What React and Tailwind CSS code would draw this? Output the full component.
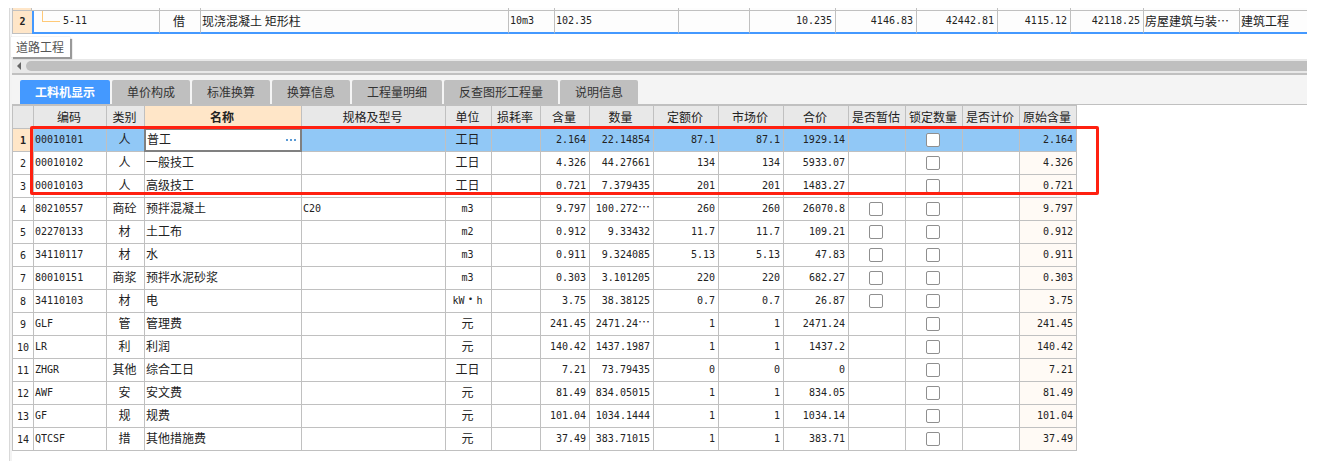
import React, { useState } from 'react';

const tabs = [
  { label: '工料机显示', width: 'w-[90px]' },
  { label: '单价构成', width: 'w-[78px]' },
  { label: '标准换算', width: 'w-[78px]' },
  { label: '换算信息', width: 'w-[78px]' },
  { label: '工程量明细', width: 'w-[90px]' },
  { label: '反查图形工程量', width: 'w-[114px]' },
  { label: '说明信息', width: 'w-[78px]' },
];

const columns = [
  { key: 'code', label: '编码', width: 'w-[73px]', align: 'text-left' },
  { key: 'type', label: '类别', width: 'w-[38px]', align: 'text-center' },
  { key: 'name', label: '名称', width: 'w-[157px]', align: 'text-left' },
  { key: 'spec', label: '规格及型号', width: 'w-[144px]', align: 'text-left' },
  { key: 'unit', label: '单位', width: 'w-[46px]', align: 'text-center' },
  { key: 'loss', label: '损耗率', width: 'w-[49px]', align: 'text-right' },
  { key: 'content', label: '含量', width: 'w-[49px]', align: 'text-right' },
  { key: 'qty', label: '数量', width: 'w-[64px]', align: 'text-right' },
  { key: 'quota', label: '定额价', width: 'w-[65px]', align: 'text-right' },
  { key: 'market', label: '市场价', width: 'w-[65px]', align: 'text-right' },
  { key: 'total', label: '合价', width: 'w-[65px]', align: 'text-right' },
  { key: 'estimate', label: '是否暂估', width: 'w-[57px]', align: 'text-center' },
  { key: 'lock', label: '锁定数量', width: 'w-[57px]', align: 'text-center' },
  { key: 'priced', label: '是否计价', width: 'w-[57px]', align: 'text-center' },
  { key: 'original', label: '原始含量', width: 'w-[57px]', align: 'text-right' },
];

// code, type, name, spec, unit, content, qty, quota, market, total, has estimate box
const resources = [
  ['00010101', '人', '普工', '', '工日', '2.164', '22.14854', '87.1', '87.1', '1929.14', false],
  ['00010102', '人', '一般技工', '', '工日', '4.326', '44.27661', '134', '134', '5933.07', false],
  ['00010103', '人', '高级技工', '', '工日', '0.721', '7.379435', '201', '201', '1483.27', false],
  ['80210557', '商砼', '预拌混凝土', 'C20', 'm3', '9.797', '100.272⋯', '260', '260', '26070.8', true],
  ['02270133', '材', '土工布', '', 'm2', '0.912', '9.33432', '11.7', '11.7', '109.21', true],
  ['34110117', '材', '水', '', 'm3', '0.911', '9.324085', '5.13', '5.13', '47.83', true],
  ['80010151', '商浆', '预拌水泥砂浆', '', 'm3', '0.303', '3.101205', '220', '220', '682.27', true],
  ['34110103', '材', '电', '', 'kW·h', '3.75', '38.38125', '0.7', '0.7', '26.87', true],
  ['GLF', '管', '管理费', '', '元', '241.45', '2471.24⋯', '1', '1', '2471.24', false],
  ['LR', '利', '利润', '', '元', '140.42', '1437.1987', '1', '1', '1437.2', false],
  ['ZHGR', '其他', '综合工日', '', '工日', '7.21', '73.79435', '0', '0', '0', false],
  ['AWF', '安', '安文费', '', '元', '81.49', '834.05015', '1', '1', '834.05', false],
  ['GF', '规', '规费', '', '元', '101.04', '1034.1444', '1', '1', '1034.14', false],
  ['QTCSF', '措', '其他措施费', '', '元', '37.49', '383.71015', '1', '1', '383.71', false],
].map(([code, type, name, spec, unit, content, qty, quota, market, total, estimate]) => ({
  code, type, name, spec, unit, loss: '', content, qty, quota, market, total, estimate, original: content,
}));

const cjk = "font-['Noto_Sans_CJK_SC',sans-serif] text-[12px]";
const mono = "font-['DejaVu_Sans_Mono','Noto_Sans_CJK_SC',monospace] text-[10px]";

// Han text is set two pixels larger than digits so that both keep the half-width rhythm
function fontFor(text) {
  return /[\u4e00-\u9fff]/.test(text)
    ? cjk + ' align-top leading-[20px]'
    : mono + ' align-middle leading-[22px]';
}

// Ellipsis and middle dot take a full-width cell
function CellText({ text }) {
  return text.split(/([⋯·])/).map((part, i) =>
    part === '⋯' || part === '·' ? (
      <span key={i} className="inline-block w-[12px] text-center font-['Noto_Sans_CJK_SC',sans-serif] text-[12px] leading-[12px]">
        {part}
      </span>
    ) : part
  );
}

function CheckBox({ label }) {
  return (
    <input
      type="checkbox"
      aria-label={label}
      className="mx-auto block size-[14px] appearance-none rounded-xs border border-[#8f8f8f] bg-white checked:bg-[#4499ff]"
    />
  );
}

function ParentRow() {
  const cell = 'border-r border-r-[#c0c0c0] border-b-2 border-b-[#4499ff] pl-px pr-[3px] py-0 truncate align-top ';
  return (
    <table className="w-full table-fixed border-separate border-spacing-0 leading-[20px] text-[#222]">
      <colgroup>
        <col className="w-[19px]" />
        <col className="w-[128px]" />
        <col className="w-[41px]" />
        <col className="w-[308px]" />
        <col className="w-[46px]" />
        <col className="w-[124px]" />
        <col className="w-[71px]" />
        <col className="w-[86px]" />
        <col className="w-[81px]" />
        <col className="w-[81px]" />
        <col className="w-[73px]" />
        <col className="w-[73px]" />
        <col className="w-[96px]" />
        <col />
      </colgroup>
      <tbody>
        <tr className="leading-[0]">
          {Array.from({ length: 14 }, (_, i) => (
            <td key={i} className={'h-[3px] border-b border-[#c0c0c0] p-0 ' + (i === 13 ? '' : 'border-r ') + (i === 0 ? 'bg-[#ffe6c8]' : 'bg-[#fdfdfd]')} />
          ))}
        </tr>
        <tr className="h-[23px] bg-[#fdfdfd]">
          <th scope="row" className={mono + ' border-b border-[#c0c0c0] bg-[#ffe6c8] p-0 text-center font-bold'}>2</th>
          <td className={cell + mono + ' border-l-2 border-l-[#4499ff]'}>
            <div className="flex items-start">
              <span className="ml-[7px] h-[11px] w-[18px] border-b border-l border-[#ffc977]" />
              <span className="ml-[3px]">5-11</span>
            </div>
          </td>
          <td className={cell + cjk + ' text-center'}>借</td>
          <td className={cell + cjk}>现浇混凝土 矩形柱</td>
          <td className={cell + mono}>10m3</td>
          <td className={cell + mono}>102.35</td>
          <td className={cell + mono} />
          {['10.235', '4146.83', '42442.81', '4115.12', '42118.25'].map((value) => (
            <td key={value} className={cell + mono + ' text-right'}>{value}</td>
          ))}
          <td className={cell + cjk}>房屋建筑与装⋯</td>
          <td className={cjk + ' truncate border-b-2 border-b-[#4499ff] py-0 pl-px pr-[3px] align-top'}>建筑工程</td>
        </tr>
      </tbody>
    </table>
  );
}

function ResourceCell({ column, row, selected }) {
  if (column.key === 'lock') return <CheckBox label={'锁定数量 ' + row.code} />;
  if (column.key === 'estimate') return row.estimate ? <CheckBox label={'是否暂估 ' + row.code} /> : null;
  if (column.key === 'name' && selected) {
    return (
      <div className="-my-px -mr-[4px] -ml-[2px] flex h-[24px] items-center border-2 border-[#808080] bg-white pr-[3px] pl-px">
        <input
          aria-label="名称"
          defaultValue={row.name}
          className={cjk + ' h-[20px] min-w-0 flex-1 bg-transparent pb-[2px] text-[#222] outline-none'}
        />
        <button type="button" aria-label="选择" className="flex gap-[2px] p-px">
          <span className="size-[2px] bg-[#5b9bd5]" />
          <span className="size-[2px] bg-[#5b9bd5]" />
          <span className="size-[2px] bg-[#5b9bd5]" />
        </button>
      </div>
    );
  }
  return <CellText text={row[column.key] || ''} />;
}

function ResourceTable() {
  return (
    <table className="w-[1065px] table-fixed border-separate border-spacing-0 border-t border-l border-[#c0c0c0] text-[#222]">
      <thead>
        <tr className="h-[23px] bg-[#e8e8e8]">
          <th className="w-[21px] border-r border-b border-[#c0c0c0] p-0" />
          {columns.map((column) => (
            <th
              key={column.key}
              scope="col"
              className={
                column.width + ' ' + cjk + ' border-r border-b border-[#c0c0c0] py-0 pr-[2px] pl-0 align-top leading-[21px] whitespace-nowrap ' +
                (column.key === 'name' ? 'bg-[#ffe6c8] font-bold' : 'font-normal')
              }
            >
              {column.label}
            </th>
          ))}
        </tr>
      </thead>
      <tbody>
        {resources.map((row, index) => {
          const selected = index === 0;
          return (
            <tr key={row.code} className={'h-[23px] ' + (selected ? 'bg-[#91c8f6]' : 'bg-white')}>
              <th
                scope="row"
                className={
                  mono + ' border-r border-b border-[#c0c0c0] p-0 pt-[2px] text-center leading-[20px] ' +
                  (selected ? 'bg-[#ffe6c8] font-bold' : 'font-normal')
                }
              >
                {index + 1}
              </th>
              {columns.map((column) => (
                <td
                  key={column.key}
                  className={
                    fontFor(String(row[column.key] || '')) + ' ' + column.align +
                    ' h-[23px] border-r border-b border-[#c0c0c0] py-0 pr-[3px] pl-px whitespace-nowrap' +
                    (column.key === 'original' && !selected ? ' bg-[#fffaf5]' : '')
                  }
                >
                  <ResourceCell column={column} row={row} selected={selected} />
                </td>
              ))}
            </tr>
          );
        })}
      </tbody>
    </table>
  );
}

export default function App() {
  const [active, setActive] = useState('工料机显示');

  return (
    <main className="min-h-screen bg-white pt-[8px] pr-[29px] pl-[9px]">
      <div className="min-h-[453px] border-l border-[#d9d9d9]">
        <div className="min-h-[453px] border-l-2 border-[#f3f3f3]">
          <section className="relative h-[51px]">
            <div className="border-l border-[#c0c0c0]">
              <ParentRow />
            </div>
            <div role="tooltip" className={cjk + ' absolute -left-px top-[29px] h-[20px] w-[59px] bg-white pl-[5px] leading-[19px] text-[#555] shadow-[2px_2px_1px_#999,0_0_1px_#bbb]'}>
              道路工程
            </div>
          </section>

          {/* Horizontal scroll bar */}
          <div className="flex h-[14px] items-center bg-[#e8e8e8]">
            <button type="button" aria-label="向左滚动" className="flex w-[14px] justify-center">
              <svg viewBox="0 0 4 8" className="h-[8px] w-[4px]">
                <path d="M4 0v8L0 4z" fill="#666" />
              </svg>
            </button>
            <div className="h-[10px] flex-1 rounded-l-full bg-[#bfbfbf]" />
          </div>

          <div className="border-t-2 border-[#c0c0c0] bg-[#f4f4f4]">
            <div role="tablist" className="flex gap-[2px] border-b border-[#c0c0c0] pt-[5px] pl-[8px]">
              {tabs.map((tab) => (
                <button
                  key={tab.label}
                  type="button"
                  role="tab"
                  aria-selected={active === tab.label}
                  onClick={() => setActive(tab.label)}
                  className={
                    tab.width + ' ' + cjk + ' h-[24px] rounded-t-xs leading-[24px] whitespace-nowrap ' +
                    (active === tab.label ? 'bg-[#4499ff] font-bold text-white' : 'bg-[#bfbfbf] text-[#333]')
                  }
                >
                  {tab.label}
                </button>
              ))}
            </div>
          </div>

          <div className="relative">
            <ResourceTable />
            {/* Highlight around the labour rows */}
            <div className="pointer-events-none absolute top-[21px] left-[18px] h-[69px] w-[1069px] rounded-xs border-3 border-[#ff2010]" />
          </div>
        </div>
      </div>
    </main>
  );
}
